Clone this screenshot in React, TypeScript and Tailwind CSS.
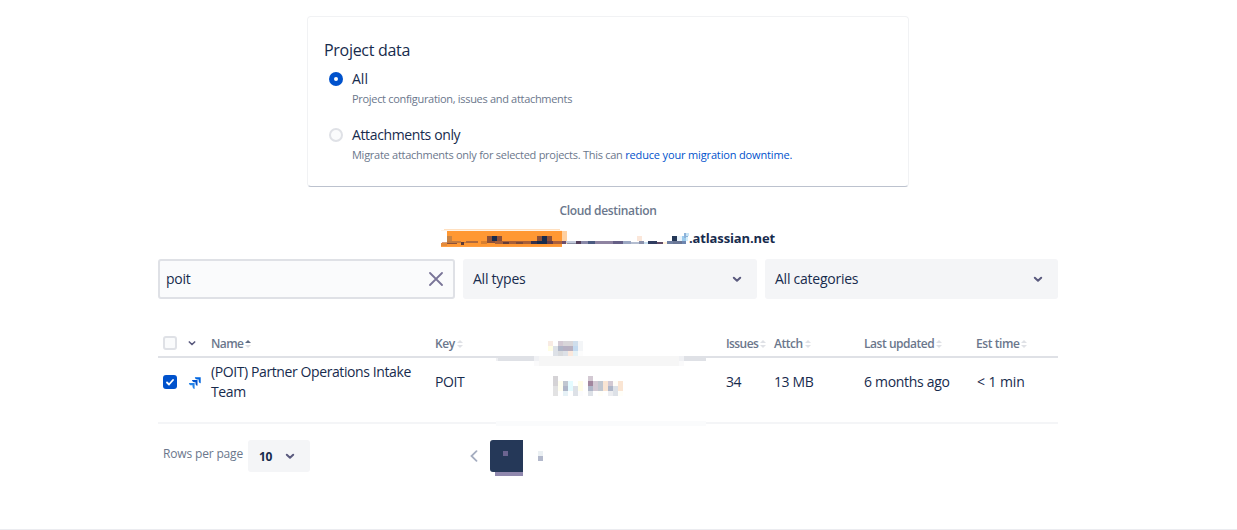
import type { ReactNode } from "react";

type Cell = [x: number, y: number, w: number, h: number, fill: string];

function Mosaic({ width, height, cells, className = "" }: { width: number; height: number; cells: Cell[]; className?: string }) {
  return (
    <svg width={width} height={height} viewBox={`0 0 ${width} ${height}`} shapeRendering="crispEdges" className={`block shrink-0 ${className}`} aria-hidden="true">
      {cells.map(([x, y, w, h, fill], i) => (
        <rect key={i} x={x} y={y} width={w} height={h} fill={fill} />
      ))}
    </svg>
  );
}

const HOST: Cell[] = [
  [3, 1, 116, 1, "#ffe0c0"],
  [0, 2, 121, 1, "#fff3e8"],
  [6, 3, 115, 16, "#ff9833"],
  [121, 3, 5, 13, "#ffd0a0"],
  [0, 15, 6, 3, "#e58c3c"],
  [0, 18, 121, 1, "#ff9f43"],
  [6, 8, 5, 5, "#c98342"],
  [46, 8, 5, 5, "#8c5038"],
  [51, 8, 5, 5, "#172b4d"],
  [56, 8, 5, 5, "#8c5038"],
  [96, 8, 5, 5, "#8c5038"],
  [101, 8, 5, 8, "#172b4d"],
  [106, 8, 5, 5, "#8c5038"],
  [1, 14, 5, 1, "#d8a080"],
  [6, 13, 14, 2, "#c07a40"],
  [6, 15, 10, 1, "#8c5038"],
  [20, 14, 3, 3, "#5c3a38"],
  [23, 14, 2, 1, "#c07a40"],
  [25, 13, 12, 2, "#b06a3c"],
  [40, 13, 6, 3, "#d87f30"],
  [46, 13, 8, 2, "#8c5038"],
  [54, 13, 42, 3, "#a85f38"],
  [62, 14, 6, 2, "#633c38"],
  [75, 14, 7, 2, "#7c4a3a"],
  [90, 13, 6, 3, "#37304a"],
  [96, 13, 5, 3, "#172b4d"],
  [106, 13, 6, 3, "#633c48"],
  [112, 13, 9, 3, "#ab5f3c"],
  [121, 13, 4, 3, "#6e4f6b"],
  [125, 13, 10, 2, "#c3cadb"],
  [126, 15, 9, 1, "#8c93a8"],
  [135, 13, 5, 3, "#55405c"],
  [140, 13, 7, 3, "#8888a8"],
  [147, 13, 7, 3, "#4a5a80"],
  [154, 13, 18, 3, "#8e83a1"],
  [172, 13, 10, 3, "#655f86"],
  [182, 13, 8, 3, "#9ba7c2"],
  [190, 14, 8, 2, "#b4bdd0"],
  [196, 8, 5, 5, "#fbe7da"],
  [198, 13, 5, 3, "#8a91ab"],
  [203, 14, 4, 2, "#c8dff0"],
  [207, 13, 9, 3, "#303d60"],
  [216, 14, 6, 2, "#604a64"],
  [222, 14, 4, 2, "#fff0d8"],
  [226, 13, 6, 3, "#7080a2"],
  [231, 8, 5, 5, "#253858"],
  [232, 13, 9, 3, "#6a7796"],
  [236, 8, 5, 5, "#eaf4fb"],
  [241, 8, 4, 5, "#9ccbed"],
  [243, 5, 4, 5, "#8cb2d9"],
  [245, 5, 3, 3, "#c9e4f5"],
  [241, 13, 4, 3, "#6d86b0"],
  [245, 9, 2, 4, "#d4eefa"],
];

const HEAD_BLOCK: Cell[] = [
  [0, 0, 5, 5, "#f8ebe3"],
  [0, 5, 5, 5, "#fffde4"],
  [5, 5, 5, 10, "#dde1e7"],
  [10, 0, 5, 5, "#d3c9d3"],
  [15, 0, 10, 5, "#d8d6d9"],
  [25, 0, 5, 5, "#cfdeec"],
  [30, 0, 5, 10, "#f3f5f7"],
  [10, 5, 5, 5, "#afb6c8"],
  [15, 5, 10, 5, "#b6b1c3"],
  [20, 5, 5, 5, "#b8b1c1"],
  [25, 5, 5, 5, "#c3daf0"],
  [10, 10, 5, 5, "#d8dadd"],
  [15, 10, 5, 5, "#dde1e7"],
  [20, 10, 5, 5, "#fbe8dc"],
  [25, 10, 5, 5, "#e6f2f6"],
  [30, 10, 5, 5, "#fcfcfc"],
];

const LEAD_BLOCK: Cell[] = [
  [0, 0, 5, 10, "#d5d3d6"],
  [0, 10, 5, 10, "#e2e2e3"],
  [5, 5, 5, 10, "#fffef0"],
  [10, 5, 5, 5, "#c1c7d0"],
  [10, 10, 5, 5, "#afb6c8"],
  [10, 15, 5, 5, "#e6f1f6"],
  [15, 5, 5, 10, "#e4fbff"],
  [20, 10, 5, 10, "#dde1e7"],
  [25, 5, 5, 10, "#fffde8"],
  [25, 15, 5, 5, "#fcfcfd"],
  [35, 0, 5, 5, "#d3c9d3"],
  [35, 5, 5, 5, "#a1869e"],
  [35, 10, 5, 5, "#afb6c8"],
  [35, 15, 5, 5, "#dde1e7"],
  [40, 5, 5, 10, "#d3c9d3"],
  [45, 5, 5, 10, "#c1c7d0"],
  [45, 15, 5, 5, "#fffef8"],
  [50, 5, 5, 10, "#fae5d3"],
  [55, 5, 5, 5, "#d3c9d3"],
  [55, 10, 5, 5, "#afb6c8"],
  [55, 15, 5, 5, "#ecedf0"],
  [60, 5, 5, 5, "#fffdf8"],
  [60, 10, 5, 10, "#dde1e7"],
  [65, 5, 5, 10, "#fae5d3"],
  [65, 15, 5, 5, "#fffef8"],
];

const HEAD_RULE: Cell[] = [
  [0, 2, 2, 3, "#eff0f3"],
  [2, 2, 208, 3, "#dfe1e6"],
  [38, 0, 150, 10, "#f0f1f4"],
  [38, 5, 150, 5, "#fafafb"],
  [43, 0, 140, 10, "#f6f6f6"],
];

function Chevron({ size = 24, className = "" }: { size?: number; className?: string }) {
  return (
    <svg width={size} height={size} viewBox="0 0 24 24" className={`shrink-0 ${className}`} aria-hidden="true">
      <path d="M8.8 10.8l3.2 3 3.2-3" fill="none" stroke="currentColor" strokeWidth="2" strokeLinecap="round" strokeLinejoin="round" />
    </svg>
  );
}

function Sort({ active = false }: { active?: boolean }) {
  return (
    <svg width="6" height="10" viewBox="0 0 6 10" className="ml-[2px] shrink-0" aria-hidden="true">
      <path d="M0 4L3 1l3 3z" fill={active ? "#5e6c84" : "#dfe1e6"} />
      <path d="M0 6l3 3 3-3z" fill="#dfe1e6" />
    </svg>
  );
}

function Head({ children, active, className = "" }: { children: ReactNode; active?: boolean; className?: string }) {
  return (
    <div className={`mt-px flex h-5 shrink-0 items-center text-xs leading-5 font-[550] whitespace-nowrap text-[#6b778c] ${className}`}>
      <span>{children}</span>
      <Sort active={active} />
    </div>
  );
}

function Select({ label, className }: { label: string; className: string }) {
  return (
    <div className={`flex h-10 items-center justify-between rounded-[3px] bg-[#f4f5f7] pr-2 pl-[10px] ${className}`}>
      <span>{label}</span>
      <Chevron className="text-[#5a5a7e]" />
    </div>
  );
}

export default function App() {
  return (
    <div className="flex h-[530px] flex-col overflow-hidden border-b border-[#ebecf0] bg-white pt-4 font-['Open_Sans','Noto_Sans',sans-serif] text-sm leading-5 text-[#172b4d]">
      <main className="ml-[158px] w-[900px]">
        <section className="ml-[149px] h-[171px] w-[602px] rounded-[4px] border border-[#f1f2f4] border-b-[#bcc2ce] pt-[23px] pl-4">
          <h2 className="text-base leading-5 font-medium tracking-[-0.3px]">Project data</h2>
          <div className="mt-[9px] flex gap-[9px] pl-[5px]">
            <span className="mt-[3px] flex size-[14px] items-center justify-center rounded-full bg-[#0052cc]">
              <span className="size-1 rounded-full bg-white" />
            </span>
            <div>
              <div>All</div>
              <div className="text-[11px] tracking-[-0.31px] text-[#6b778c]">Project configuration, issues and attachments</div>
            </div>
          </div>
          <div className="mt-4 flex gap-[9px] pl-[5px]">
            <span className="mt-[3px] size-[14px] rounded-full border-2 border-[#dfe1e6] bg-[#fafbfc]" />
            <div>
              <div className="tracking-[-0.37px]">Attachments only</div>
              <div className="flex text-[11px] whitespace-pre text-[#6b778c]">
                <span className="tracking-[-0.27px]">Migrate attachments only for selected projects. This can </span>
                <a className="font-medium tracking-[-0.15px] text-[#0052cc]">reduce your migration downtime.</a>
              </div>
            </div>
          </div>
        </section>

        <div className="mt-[14px] text-center text-xs leading-5 font-[550] tracking-[-0.32px] text-[#6b778c]">Cloud destination</div>
        <div className="mt-[7px] ml-[283px] flex h-5 text-[13px] font-bold">
          <Mosaic width={248} height={20} cells={HOST} />
          <span className="tracking-[-0.14px]">.atlassian.net</span>
        </div>

        <div className="mt-[11px] flex gap-2 tracking-[-0.25px]">
          <div className="flex h-10 w-[297px] items-center justify-between rounded-[3px] border-2 border-[#dfe1e6] bg-[#fafbfc] pr-[10px] pl-[6px]">
            <span>poit</span>
            <svg width="14" height="14" viewBox="0 0 14 14" aria-hidden="true">
              <path d="M1 1l12 12M13 1L1 13" stroke="#7a7598" strokeWidth="1.8" strokeLinecap="round" />
            </svg>
          </div>
          <Select label="All types" className="w-[294px]" />
          <Select label="All categories" className="w-[293px]" />
        </div>

        <div className="mt-[34px] flex h-[25px] border-b-2 border-[#dfe1e6] pl-[5px]">
          <span className="mt-[3px] size-[14px] shrink-0 rounded-[3px] border-2 border-[#dfe1e6] bg-[#fafbfc]" />
          <Chevron size={20} className="ml-[5px] text-[#5a5a7e]" />
          <Head active className="ml-[9px] w-[224px] tracking-[-0.6px]">Name</Head>
          <Head className="w-[61px] tracking-[-0.4px]">Key</Head>
          <div className="relative w-[230px] pt-2 pl-[52px]">
            <Mosaic width={35} height={15} cells={HEAD_BLOCK} />
            <Mosaic width={212} height={10} cells={HEAD_RULE} className="absolute top-[23px] left-0" />
          </div>
          <Head className="w-[48px] tracking-[-0.58px]">Issues</Head>
          <Head className="w-[90px] tracking-[-0.45px]">Attch</Head>
          <Head className="w-[112px] tracking-[-0.46px]">Last updated</Head>
          <Head className="tracking-[-0.43px]">Est time</Head>
        </div>

        <div className="flex h-[66px] border-b-2 border-[#f4f5f7] pt-1 pl-[5px]">
          <span className="mt-[13px] flex size-[14px] shrink-0 items-center justify-center rounded-[3px] bg-[#0052cc]">
            <svg width="8" height="7" viewBox="0 0 8 7" aria-hidden="true">
              <path d="M1 3.5l2 2L7 1" fill="none" stroke="#fff" strokeWidth="1.8" strokeLinecap="round" strokeLinejoin="round" />
            </svg>
          </span>
          <svg width="14" height="14" viewBox="0 0 14 14" className="mt-[14px] ml-[11px] shrink-0" aria-hidden="true">
            <path d="M6.8 1.3h5.9v6c-1.4-.3-2-1.3-2-2.4V3.5H9.4c-1.3 0-2.3-.8-2.6-2.2z" fill="#0065e0" />
            <path d="M4 4.1h5.500v5.700c-1.400-.3-2-1.200-2-2.400V6.200H6.300c-1.200 0-2.100-.8-2.300-2.100z" fill="#0052cc" />
            <path d="M.9 7h5.700v6c-1.400-.3-2.100-1.300-2.100-2.500V9.300H3.200C1.900 9.300 1.100 8.400.9 7z" fill="#2684e8" />
          </svg>
          <div className="ml-[9px] w-[224px] shrink-0 tracking-[-0.4px]">
            (POIT) Partner Operations Intake
            <br />
            Team
          </div>
          <div className="mt-[10px] w-[61px] shrink-0 tracking-[-0.4px]">POIT</div>
          <div className="relative w-[230px] shrink-0 pt-[14px] pl-[57px]">
            <Mosaic width={70} height={20} cells={LEAD_BLOCK} />
            <span className="absolute top-[59px] left-0 h-[5px] w-[210px] bg-[#fafbfc]" />
          </div>
          <div className="mt-[10px] w-[48px] shrink-0 tracking-[-0.5px]">34</div>
          <div className="mt-[10px] w-[90px] shrink-0 tracking-[-0.4px]">13 MB</div>
          <div className="mt-[10px] w-[113px] shrink-0 tracking-[-0.3px]">6 months ago</div>
          <div className="mt-[10px] shrink-0 tracking-[-0.1px]">&lt; 1 min</div>
        </div>

        <div className="mt-4 flex pl-[5px]">
          <span className="mt-1 w-[85px] text-xs leading-5 font-medium tracking-[-0.16px] text-[#6b778c]">Rows per page</span>
          <div className="flex h-8 w-[62px] items-center rounded-[3px] bg-[#f4f5f7] pl-[11px] text-xs font-bold">
            <span className="w-[19px] pt-[2px] tracking-[-0.3px]">10</span>
            <Chevron className="text-[#5a5a7e]" />
          </div>
          <svg width="8" height="12" viewBox="0 0 8 12" className="mt-[10px] ml-[160px]" aria-hidden="true">
            <path d="M6.5 1.2L1.5 6l5 4.8" fill="none" stroke="#a5adc0" strokeWidth="1.8" strokeLinecap="round" />
          </svg>
          <div className="ml-3 w-[33px]">
            <div className="flex h-8 rounded-l-[3px] bg-[#253858] pt-[11px] pl-[13px]">
              <span className="size-[5px] bg-[#6b6490]" />
            </div>
            <div className="ml-[5px] h-1 bg-[#9088ae]" />
          </div>
          <Mosaic width={5} height={10} cells={[[0, 0, 5, 5, "#ebf0f3"], [0, 5, 5, 5, "#b3b9cc"]]} className="mt-[11px] ml-[15px]" />
        </div>
      </main>
    </div>
  );
}
